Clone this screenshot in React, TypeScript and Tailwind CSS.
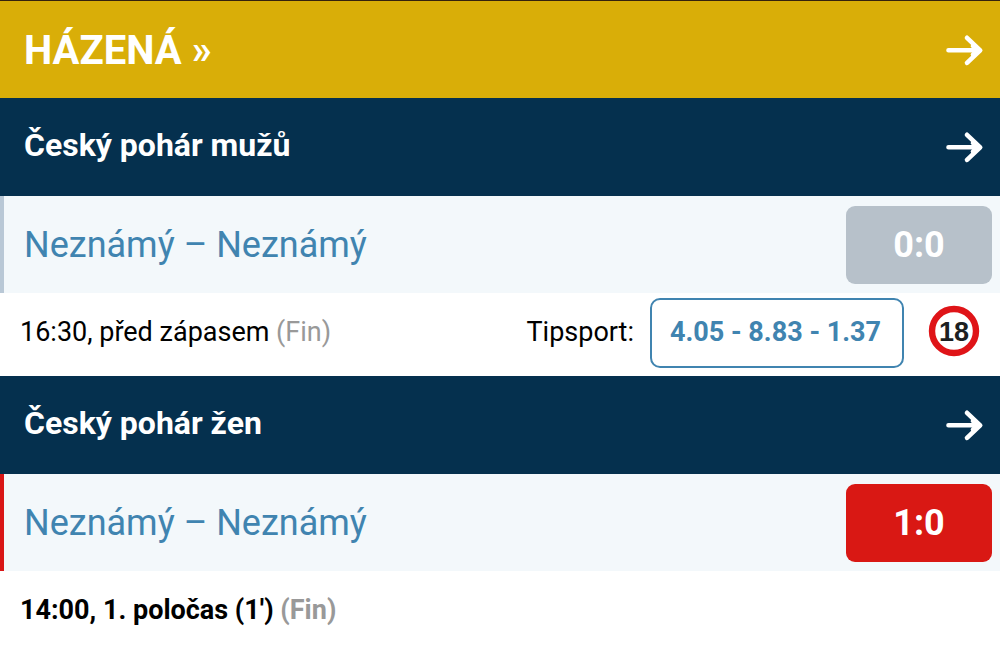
import React from "react";

function Arrow() {
  return (
    <svg className="h-10 w-10" viewBox="0 0 40 40" fill="none" stroke="#ffffff" strokeWidth="4.6" strokeLinecap="round" strokeLinejoin="round" aria-hidden="true">
      <path d="M4.5 20.3H34M23 7.8L36.2 20.3L23 32.8" />
      <path d="M29 16L34 20.3L29 24.6" />
    </svg>
  );
}

function AgeBadge() {
  return (
    <svg className="mb-1 h-13 w-13" viewBox="0 0 52 52" role="img" aria-label="18+">
      <circle cx="26" cy="26" r="22" fill="#ffffff" stroke="#df1418" strokeWidth="6.4" />
      <text x="26" y="35.5" textAnchor="middle" fontSize="27" fontWeight="700" fontFamily="Liberation Sans, sans-serif" fill="#1c1f22">18</text>
    </svg>
  );
}

function LeagueHeader({ title }: { title: string }) {
  return (
    <a href="#league" className="flex h-[98px] items-center justify-between bg-[#05304e] pr-4 pl-6 text-white">
      <h2 className="pb-1 text-[32px] leading-10 font-bold">{title}</h2>
      <Arrow />
    </a>
  );
}

function MatchRow({ teams, score, live }: { teams: string; score: string; live?: boolean }) {
  return (
    <div className={`flex h-[97px] items-center justify-between border-l-4 bg-[#f3f8fb] pr-2 pl-5 ${live ? "border-[#d91616]" : "border-[#b9c8d6]"}`}>
      <a href="#match" className="text-4xl text-[#4084b0]">{teams}</a>
      <span className={`flex h-[78px] w-[146px] items-center justify-center rounded-[9px] text-4xl font-bold text-white ${live ? "bg-[#d91814]" : "bg-[#b7c1ca]"}`}>{score}</span>
    </div>
  );
}

export default function App() {
  return (
    <main className="min-h-screen bg-white font-['Roboto',sans-serif] text-black">
      <a href="#handball" className="flex h-[98px] items-center justify-between border-t border-[#35220d] bg-[#d9ae08] pr-4 pl-6 text-white">
        <h1 className="pt-0.5 text-[40px] leading-12 font-bold">HÁZENÁ »</h1>
        <Arrow />
      </a>
      <section>
        <LeagueHeader title="Český pohár mužů" />
        <MatchRow teams="Neznámý – Neznámý" score="0:0" />
        <div className="flex h-[83px] items-center justify-between px-5 pb-1 text-[27px]">
          <p>16:30, před zápasem <span className="text-[#999999]">(Fin)</span></p>
          <div className="flex items-center">
            <span className="mr-4">Tipsport:</span>
            <a href="#odds" className="mr-6 flex h-[70px] w-[254px] items-center rounded-[10px] border-2 border-[#4084b0] pl-[18px] font-bold text-[#4084b0]">4.05 - 8.83 - 1.37</a>
            <AgeBadge />
          </div>
        </div>
      </section>
      <section>
        <LeagueHeader title="Český pohár žen" />
        <MatchRow teams="Neznámý – Neznámý" score="1:0" live />
        <div className="flex h-[79px] items-center px-5 text-[27px]">
          <p className="font-bold">14:00, 1. poločas (1') <span className="text-[#999999]">(Fin)</span></p>
        </div>
      </section>
    </main>
  );
}
